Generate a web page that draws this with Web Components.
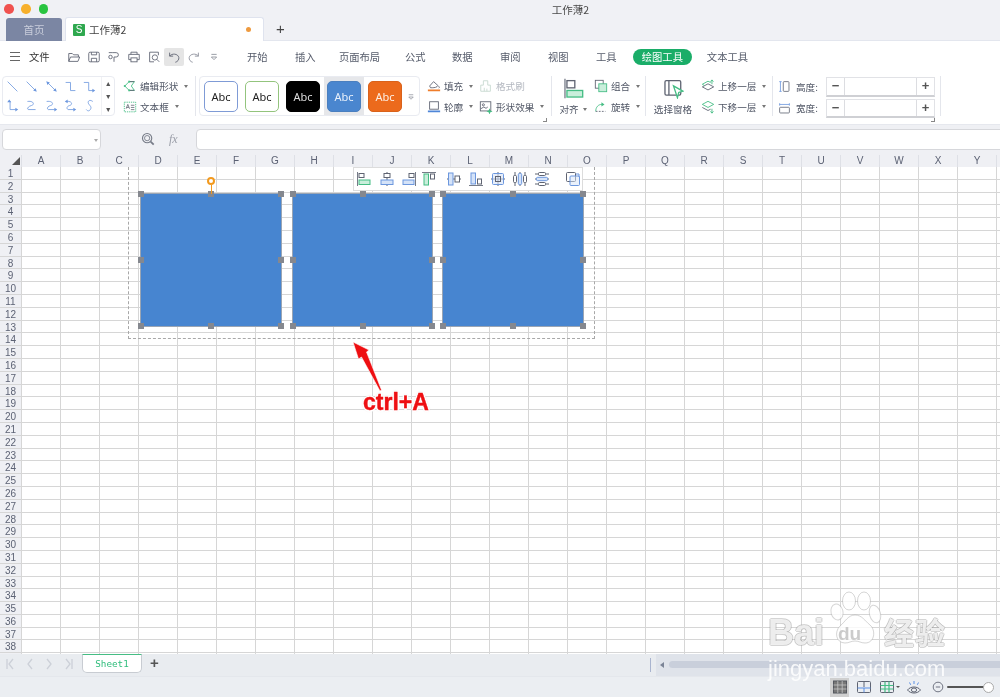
<!DOCTYPE html>
<html lang="zh">
<head>
<meta charset="utf-8">
<title>工作薄2</title>
<style>
  html, body { margin: 0; height: 699px; overflow: hidden; background: #fff; }
  body { font-family: "Noto Sans CJK SC", "Liberation Sans", sans-serif; color: #474d5c; }
</style>
</head>
<body>
<wps-app>
  <wps-titlebar></wps-titlebar>
  <wps-menubar></wps-menubar>
  <wps-ribbon></wps-ribbon>
  <wps-formula></wps-formula>
  <wps-sheet>
    <wps-selection></wps-selection>
    <wps-shape style="left:140px;top:38px" rotate></wps-shape>
    <wps-shape style="left:292px;top:38px;width:141px"></wps-shape>
    <wps-shape style="left:442px;top:38px"></wps-shape>
    <wps-floatbar></wps-floatbar>
    <wps-note></wps-note>
  </wps-sheet>
  <wps-sheetbar></wps-sheetbar>
  <wps-status></wps-status>
  <wps-watermark></wps-watermark>
</wps-app>

<script>
const G = '#45bd84', GL = '#c9eedb', B = '#6c97de', BL = '#d5e3f8', K = '#5f6472', O = '#ef7d2b';

// todos los iconos en una caja de 16x16
const ICONS = {
  open: `<path d="M2 13V4h4l1.500 1.500H13V8M2 13l2-5h10.500l-2 5z" stroke="${K}"/>`,
  save: `<rect x="2" y="2.500" width="12" height="11" rx="1.500" stroke="${K}"/><path d="M5 2.500v3h6v-3M5 13.500v-4h6v4" stroke="${K}"/>`,
  brush: `<path d="M6 3h4.500a2.500 2.500 0 0 1 0 5H8v5.500" stroke="${K}"/><circle cx="4" cy="8" r="2" stroke="${K}"/><path d="M2 3h4" stroke="${K}"/>`,
  print: `<path d="M4.500 5V2.500h7V5M4.500 11H2V5h12v6h-2.500" stroke="${K}"/><rect x="4.500" y="9" width="7" height="4.500" stroke="${K}"/>`,
  preview: `<path d="M13 6V2.500H3v11h5" stroke="${K}"/><circle cx="9" cy="8.500" r="3" stroke="${K}"/><path d="M11.200 10.700l2.800 2.800" stroke="${K}"/>`,
  undo: `<path d="M3 3v4h4M3 7c2.500-3.500 9.500-3 10.500 1.500.5 2.500-1.500 5-4 5.500" stroke="${K}"/>`,
  redo: `<path d="M13 3v4H9M13 7C10.500 3.500 3.500 4 2.500 8.500c-.5 2.500 1.500 5 4 5.500" stroke="#8b8f9a"/>`,
  more: `<path d="M5 5h6M5 8h6l-3 3z" stroke="#80848f" stroke-width=".9"/>`,
  line1: `<path d="M2 2l12 12" stroke="${B}"/>`,
  line2: `<path d="M2 2l11 11" stroke="${B}"/><path d="M14.500 14.500l-4.500-1.500 3-3z" fill="${B}"/>`,
  line3: `<path d="M3 3l10 10" stroke="${B}"/><path d="M1.500 1.500l4.500 1.500-3 3zM14.500 14.500l-4.500-1.500 3-3z" fill="${B}"/>`,
  elbow1: `<path d="M2 3h6v10h6" stroke="${B}"/>`,
  elbow2: `<path d="M1 3h6v10h5.500" stroke="${B}"/><path d="M15 13l-3.500-2.300v4.600z" fill="${B}"/>`,
  elbow3: `<path d="M3 3h2v10h7" stroke="${B}"/><path d="M4 .500l-2.500 3.500h5zM15 13l-3.500-2.300v4.600z" fill="${B}"/>`,
  curve1: `<path d="M3 3c8-1 9 4 5 5S2 12 4 13h9" stroke="${B}"/>`,
  curve2: `<path d="M2 3c8-1 9 4 5 5s-5 4-3 5h8" stroke="${B}"/><path d="M15 13l-3.500-2.300v4.600z" fill="${B}"/>`,
  curve3: `<path d="M3 3c7-1 8 4 4 5s-4 4-2 5h7" stroke="${B}"/><path d="M1 3l3.500-2.300v4.600zM15 13l-3.500-2.300v4.600z" fill="${B}"/>`,
  free: `<path d="M12 3c-4-3-7 0-5 3s4 4 2 7-4 1-5 0" stroke="${B}"/>`,
  edit: `<path d="M2 8l5-5h6l-3.500 5 3.500 5H7z" stroke="${G}"/><path d="M7 3h6M7 13h6" stroke="${K}"/><rect x="1" y="7" width="2" height="2" fill="${G}"/><rect x="6" y="2" width="2" height="2" fill="${G}"/><rect x="6" y="12" width="2" height="2" fill="${G}"/>`,
  textbox: `<rect x="1.500" y="2.500" width="13" height="11" stroke="${G}" stroke-dasharray="1.500 1"/><path d="M3.500 10l2-5 2 5M4.300 8.500h2.400M9 6h4M9 8.500h4M9 11h4" stroke="${K}" stroke-width=".9"/>`,
  fill: `<path d="M3 8l4.500-5 5 4.500c-1 2-4 2.500-6.500 2.500H4z" stroke="${K}"/><path d="M13 8c1 1 1.500 2 .5 2.500" stroke="${K}"/><rect x="1" y="12" width="14" height="2" fill="${O}"/>`,
  outline: `<rect x="3" y="2" width="10" height="8.500" stroke="${K}"/><rect x="1" y="12" width="14" height="2" fill="#4f86d8"/>`,
  painter: `<path d="M5 2h5v5h3v7H2V7h3z" stroke="#c6d8cf"/><path d="M6 10v4M9 11v3" stroke="#c6d8cf"/>`,
  effect: `<rect x="1.500" y="2" width="12" height="10.500" stroke="${K}"/><circle cx="5" cy="5.500" r="1.200" stroke="${K}"/><path d="M2 10l3.500-2 2.500 1.500 2-1.500" stroke="${K}"/><path d="M12 9.500l1 2.500 2.500 1-2.500 1-1 2.500-1-2.500-2.500-1 2.500-1z" fill="${G}"/>`,
  align: `<path d="M1.500 .5v15" stroke="#777c88"/><rect x="3" y="2" width="6" height="5.500" stroke="${K}"/><rect x="3" y="9.500" width="12" height="5" fill="${GL}" stroke="${G}"/>`,
  group: `<rect x="1.500" y="1.500" width="9" height="9" stroke="${K}"/><rect x="5.500" y="5.500" width="9" height="9" fill="${GL}" stroke="${G}"/>`,
  rotate: `<path d="M2 13c0-5 3-8 7-8" stroke="${G}"/><path d="M12 5l-3.500-2.500v5z" fill="${G}"/><path d="M2 13h11" stroke="${K}" stroke-dasharray="2 1.500"/>`,
  pane: `<rect x="1.500" y="2" width="12" height="11" rx="1" stroke="${K}"/><path d="M4.500 2v11" stroke="${K}"/><path d="M8 6l7 4-3 1-1 4z" fill="#fff" stroke="${G}"/>`,
  up: `<path d="M1.500 9l6.500-3.500 6.500 3.500-6.500 3.500z" stroke="${K}"/><path d="M1.500 6L8 2.500l3 1.500M1.500 6L4 7.500" stroke="${G}"/><path d="M12.500 6V1.500M10.800 3l1.700-2 1.700 2" stroke="${G}"/>`,
  down: `<path d="M1.500 5L8 1.500 14.500 5 8 8.500z" stroke="${G}"/><path d="M1.500 8.500L8 12l3-1.500" stroke="${K}"/><path d="M12.500 10v5M10.800 13l1.700 2 1.700-2" stroke="${G}"/>`,
  height: `<rect x="6.500" y="2" width="7" height="12" rx="1" stroke="${K}"/><path d="M3 2v12M1.500 2h3M1.500 14h3" stroke="${B}"/>`,
  width: `<rect x="2" y="6.500" width="12" height="7" rx="1" stroke="${K}"/><path d="M2 3h12M2 1.500v3M14 1.500v3" stroke="${B}"/>`,
  find: `<circle cx="7" cy="7" r="5.300" stroke="#777c88" stroke-width="1.300"/><circle cx="7" cy="7" r="3" stroke="#777c88"/><path d="M11 11l3.500 3.500" stroke="#777c88" stroke-width="2"/>`,
  a1: `<path d="M1.500 1v14" stroke="#777c88"/><rect x="3" y="2.500" width="5" height="4" stroke="${K}"/><rect x="3" y="9" width="11" height="4.500" fill="${GL}" stroke="${G}"/>`,
  a2: `<path d="M8 1v14" stroke="${K}"/><rect x="5" y="2.500" width="6" height="4" fill="#fff" stroke="${K}"/><rect x="2" y="9" width="12" height="4.500" fill="${BL}" stroke="${B}"/>`,
  a3: `<path d="M14.500 1v14" stroke="#777c88"/><rect x="8" y="2.500" width="5" height="4" stroke="${K}"/><rect x="2" y="9" width="11" height="4.500" fill="${BL}" stroke="${B}"/>`,
  a4: `<path d="M1 1.500h14" stroke="#777c88"/><rect x="3" y="3" width="4.500" height="11" fill="${GL}" stroke="${G}"/><rect x="9.500" y="3" width="4" height="5" stroke="${K}"/>`,
  a5: `<path d="M1 8h14" stroke="${K}"/><rect x="2.500" y="2" width="4.500" height="12" fill="${BL}" stroke="${B}"/><rect x="9" y="5" width="4.500" height="6" fill="#fff" stroke="${K}"/>`,
  a6: `<path d="M1 14.500h14" stroke="#777c88"/><rect x="3" y="2" width="4.500" height="11" fill="${BL}" stroke="${B}"/><rect x="9.500" y="8" width="4" height="5" stroke="${K}"/>`,
  a7: `<path d="M1 8h14M8 1v14" stroke="${K}"/><rect x="2.500" y="2.500" width="11" height="11" rx="1" fill="${BL}" fill-opacity=".6" stroke="${B}"/><rect x="5.500" y="5.500" width="5" height="5" stroke="${K}"/>`,
  a8: `<path d="M3 1v14M8 1v14M13 1v14" stroke="${K}"/><rect x="1.500" y="4.500" width="3" height="7" rx="1" fill="#fff" stroke="${K}"/><rect x="6.300" y="2.500" width="3.400" height="11" rx="1" fill="${BL}" stroke="${B}"/><rect x="11.500" y="4.500" width="3" height="7" rx="1" fill="#fff" stroke="${K}"/>`,
  a9: `<path d="M1 3h14M1 8h14M1 13h14" stroke="${K}"/><rect x="4.500" y="1.500" width="7" height="3" rx="1" fill="#fff" stroke="${K}"/><rect x="2.500" y="6.300" width="11" height="3.400" rx="1" fill="${BL}" stroke="${B}"/><rect x="4.500" y="11.500" width="7" height="3" rx="1" fill="#fff" stroke="${K}"/>`,
  a10: `<rect x="1.500" y="1.500" width="9" height="9" rx="1" stroke="${K}"/><rect x="5" y="5" width="9.500" height="9.500" rx="1" fill="${BL}" fill-opacity=".5" stroke="${B}"/><path d="M11 3h3v3" stroke="${B}"/>`,
  grid: `<rect x="1.500" y="2" width="13" height="12" fill="#777" stroke="#55585f"/><path d="M1.500 6h13M1.500 10h13M5.800 2v12M10.200 2v12" stroke="#c6c6c6" stroke-width=".8"/>`,
  split: `<rect x="1.500" y="2.500" width="13" height="11" rx="1" stroke="${K}"/><path d="M8 2.500V8" stroke="${K}"/><path d="M1.500 9h13M8 9v4.500" stroke="#5b8fe3"/>`,
  freeze: `<rect x="1.500" y="2.500" width="13" height="11" rx="1" stroke="${K}"/><path d="M1.500 6.500h13M1.500 10h13M6 2.500v11M10 2.500v11" stroke="${G}" stroke-width="1.200"/>`,
  eye: `<path d="M1.500 11c3-4 10-4 13 0-3 4-10 4-13 0z" stroke="${K}"/><ellipse cx="8" cy="11" rx="2.600" ry="2" stroke="${K}"/><path d="M8 2v3M3.500 3.500l1.200 2.300M12.500 3.500l-1.200 2.300" stroke="#5b8fe3"/>`,
  minus: `<circle cx="8" cy="8" r="5.500" stroke="${K}"/><path d="M5.500 8h5" stroke="${K}"/>`
};

class WpsIcon extends HTMLElement {
  connectedCallback() {
    const size = this.getAttribute('size') || 16;
    this.attachShadow({ mode: 'open' }).innerHTML = `
      <style>:host { display: inline-flex; flex: none; } svg { display: block; }</style>
      <svg width="${size}" height="${size}" viewBox="0 0 16 16" fill="none">${ICONS[this.getAttribute('name')]}</svg>`;
  }
}

// base: cada elemento declara su html en render()
class Block extends HTMLElement {
  connectedCallback() {
    this.attachShadow({ mode: 'open' }).innerHTML = this.render();
  }
}

class WpsApp extends Block {
  render() {
    // la captura original viene reescalada y se ve algo suave
    return `<style>
      :host { display: block; position: relative; width: 1000px; height: 699px; overflow: hidden; background: #fff; filter: blur(.35px); }
    </style><slot></slot>`;
  }
}

class WpsTitlebar extends Block {
  render() {
    return `<style>
      :host { display: block; height: 41px; background: #f0f1f5; position: relative; box-sizing: border-box; border-bottom: 1px solid #e3e6ee; }
      .lights { display: flex; gap: 7.800px; padding: 4px 0 0 4px; height: 9px; }
      .lights i { width: 9.500px; height: 9.500px; border-radius: 50%; }
      .title { position: absolute; left: 0; right: 0; top: 1px; text-align: center; font-size: 10.500px; line-height: 17px; color: #4a4a4a; transform: translateX(70.500px); }
      .tabs { display: flex; align-items: flex-end; padding: 5px 0 0 6px; height: 23px; gap: 3px; }
      .tab { height: 23px; box-sizing: border-box; display: flex; align-items: center; font-size: 10.500px; border-radius: 3px 3px 0 0; }
      .home { width: 56px; justify-content: center; background: #7b86a3; color: #c9cedb; }
      .book { width: 199px; background: #fff; border: 1px solid #dfe3ee; border-bottom: 0; padding: 0 12px 0 7px; gap: 4px; color: #444; height: 24px; }
      .s { width: 12px; height: 12px; background: #2fa84f; border-radius: 1px; color: #fff; font: 10px/12px "Liberation Sans", sans-serif; text-align: center; }
      .name { flex: 1; }
      .dot { width: 5px; height: 5px; border-radius: 50%; background: #ee9a3f; }
      .plus { font: 15px/20px "Liberation Sans", sans-serif; color: #444; margin: 0 0 1px 9px; align-self: center; }
    </style>
    <div class="lights"><i style="background:#f0524f"></i><i style="background:#f7b02c"></i><i style="background:#29c440"></i></div>
    <div class="title">工作薄2</div>
    <div class="tabs">
      <div class="tab home">首页</div>
      <div class="tab book"><span class="s">S</span><span class="name">工作薄2</span><span class="dot"></span></div>
      <div class="plus">+</div>
    </div>`;
  }
}

class WpsMenubar extends Block {
  render() {
    const tools = ['open', 'save', 'brush', 'print', 'preview', 'undo', 'redo', 'more'];
    // nombre y hueco hasta la siguiente pestaña
    const tabs = [['开始', 27.4], ['插入', 23.4], ['页面布局', 24.8], ['公式', 26.4], ['数据', 27.4], ['审阅', 27.4], ['视图', 27.4], ['工具', 16.4]];
    return `<style>
      :host { display: flex; height: 31px; align-items: center; font-size: 10.300px; color: #555b6a; padding-left: 10px; box-sizing: border-box; }
      .burger { width: 10px; height: 7px; border-top: 1px solid #666; border-bottom: 1px solid #666; position: relative; margin-right: 9px; }
      .burger::after { content: ""; position: absolute; left: 0; right: 0; top: 3px; height: 1px; background: #666; }
      .file { width: 20.600px; color: #333; margin-right: 14.400px; white-space: nowrap; }
      .tools { display: flex; width: 160px; }
      .tool { width: 20px; height: 18px; flex: none; display: flex; align-items: center; justify-content: center; border-radius: 2px; }
      .tool.on { background: #e5e5e5; }
      .tabs { display: flex; margin-left: 23px; }
      .tabs span { white-space: nowrap; }
      .pill { background: #1aad68; color: #fff; border-radius: 8px; width: 59px; text-align: center; line-height: 16px; margin-right: 15px; }
    </style>
    <div class="burger"></div><div class="file">文件</div>
    <div class="tools">${tools.map(n => `<div class="tool ${n === 'undo' ? 'on' : ''}"><wps-icon name="${n}" size="14"></wps-icon></div>`).join('')}</div>
    <div class="tabs">${tabs.map(t => `<span style="margin-right:${t[1]}px">${t[0]}</span>`).join('')}<span class="pill">绘图工具</span><span>文本工具</span></div>`;
  }
}

class WpsBtn extends Block {
  render() {
    const disabled = this.hasAttribute('disabled');
    return `<style>
      :host { display: flex; align-items: center; height: 20.500px; font-size: 9.600px; white-space: nowrap; color: ${disabled ? '#b4b8c0' : '#515766'}; }
      wps-icon { margin-right: 3px; }
      .caret { width: 0; height: 0; border: 2.500px solid transparent; border-top: 3px solid #777; border-bottom: 0; margin-left: 6px; }
    </style>
    <wps-icon name="${this.getAttribute('icon')}" size="14"></wps-icon><span>${this.getAttribute('label')}</span>${this.hasAttribute('caret') ? '<i class="caret"></i>' : ''}`;
  }
}

class WpsSpin extends Block {
  render() {
    return `<style>
      :host { display: flex; width: 109px; height: 19.500px; box-sizing: border-box; background: #fff; border: 1px solid #e1e2e6; border-bottom: 2px solid #cfd0d4; font: 13px/16px "Liberation Sans", sans-serif; color: #555; }
      b { width: 17px; text-align: center; font-weight: bold; }
      i { flex: 1; border-left: 1px solid #dcdde1; border-right: 1px solid #dcdde1; }
    </style><b>−</b><i></i><b>+</b>`;
  }
}

class WpsRibbon extends Block {
  render() {
    const lines = ['line1', 'line2', 'line3', 'elbow1', 'elbow2', 'elbow3', 'curve1', 'curve2', 'curve3', 'free'];
    const styles = [
      ['#fff', '#222', '#7f9bd6', 0], ['#fff', '#222', '#93c47d', 0], ['#000', '#ddd', '#000', 0],
      ['#4a86cf', '#e8f0fb', '#4a7fbf', 1], ['#ec6a1c', '#fdeee3', '#d9621b', 0]
    ];
    return `<style>
      :host { display: flex; height: 52px; padding: 4px 0 0 2px; box-sizing: border-box; align-items: flex-start; background: #fff; position: relative; }
      .box { border: 1px solid #e9ebf1; border-radius: 4px; height: 40px; box-sizing: border-box; display: flex; }
      .lines { width: 113px; }
      .line-grid { display: grid; grid-template-columns: repeat(5, 19.300px); grid-auto-rows: 19px; width: 100px; justify-items: center; align-items: center; }
      .scroll { width: 12px; margin-left: auto; border-left: 1px solid #f0f1f4; color: #555; font: 7px/13px "Liberation Sans", sans-serif; text-align: center; }
      .sep { width: 1px; height: 40px; background: #e4e6ec; flex: none; }
      .col { display: flex; flex-direction: column; flex: none; }
      .gallery { width: 221px; padding-left: 4px; align-items: center; position: relative; }
      .abc { width: 34px; height: 31px; box-sizing: border-box; border-radius: 5px; border: 1px solid; font: 11px/29px "Noto Sans", sans-serif; text-align: center; margin-right: 7px; flex: none; }
      .sel { background: #e6e7ea; padding: 0 3px; height: 38px; margin-right: 4px; margin-left: -3px; display: flex; align-items: center; }
      .sel .abc { margin: 0; }
      .gmore { position: absolute; right: 2px; top: 14px; }
      .big { display: flex; flex-direction: column; align-items: center; font-size: 9.600px; white-space: nowrap; flex: none; line-height: 12px; gap: 2px; padding-top: 2px; color: #515766; height: 40px; box-sizing: border-box; }
      .big span { margin-top: auto; padding-bottom: 1px; }
      .caret { display: inline-block; width: 0; height: 0; border: 2.500px solid transparent; border-top: 3px solid #777; border-bottom: 0; margin-left: 4px; vertical-align: 2px; }
      .size { display: flex; align-items: center; height: 21.500px; font-size: 9.600px; white-space: nowrap; color: #515766; }
      .size span { margin-left: 5px; width: 31px; }
      .mark { position: absolute; width: 3px; height: 3px; border-right: 1px solid #888; border-bottom: 1px solid #888; top: 46px; }
    </style>
    <div class="box lines">
      <div class="line-grid">${lines.map(n => `<wps-icon name="${n}" size="13"></wps-icon>`).join('')}</div>
      <div class="scroll">▲<br>▼<br>▼</div>
    </div>
    <div class="col" style="margin-left:8px;width:72px">
      <wps-btn icon="edit" label="编辑形状" caret></wps-btn>
      <wps-btn icon="textbox" label="文本框" caret></wps-btn>
    </div>
    <div class="sep"></div>
    <div class="box gallery" style="margin-left:3px">
      ${styles.map(s => {
        const b = `<div class="abc" style="background:${s[0]};color:${s[1]};border-color:${s[2]}">Abc</div>`;
        return s[3] ? `<div class="sel">${b}</div>` : b;
      }).join('')}
      <wps-icon class="gmore" name="more" size="12"></wps-icon>
    </div>
    <div class="col" style="margin-left:7px;width:52px">
      <wps-btn icon="fill" label="填充" caret></wps-btn>
      <wps-btn icon="outline" label="轮廓" caret></wps-btn>
    </div>
    <div class="col" style="width:72px">
      <wps-btn icon="painter" label="格式刷" disabled></wps-btn>
      <wps-btn icon="effect" label="形状效果" caret></wps-btn>
    </div>
    <div class="sep"></div>
    <div class="big" style="width:42px">
      <wps-icon name="align" size="21"></wps-icon><span>对齐<i class="caret"></i></span>
    </div>
    <div class="col" style="width:51px">
      <wps-btn icon="group" label="组合" caret></wps-btn>
      <wps-btn icon="rotate" label="旋转" caret></wps-btn>
    </div>
    <div class="sep"></div>
    <div class="big" style="width:54px">
      <wps-icon name="pane" size="21"></wps-icon><span>选择窗格</span>
    </div>
    <div class="sep" style="background:transparent"></div>
    <div class="col" style="width:71px">
      <wps-btn icon="up" label="上移一层" caret></wps-btn>
      <wps-btn icon="down" label="下移一层" caret></wps-btn>
    </div>
    <div class="sep"></div>
    <div class="col" style="margin-left:5px;width:48px">
      <div class="size"><wps-icon name="height" size="13"></wps-icon><span>高度:</span></div>
      <div class="size"><wps-icon name="width" size="13"></wps-icon><span>宽度:</span></div>
    </div>
    <div class="col" style="gap:2px;padding-top:1px">
      <wps-spin></wps-spin>
      <wps-spin></wps-spin>
    </div>
    <div class="sep" style="margin-left:5px"></div>
    <i class="mark" style="left:543px"></i>
    <i class="mark" style="left:931px"></i>`;
  }
}

class WpsFormula extends Block {
  render() {
    return `<style>
      :host { display: flex; height: 31px; box-sizing: border-box; background: #eff0f4; padding: 4px 0 5px 2px; align-items: stretch; border-top: 1px solid #e6e8ee; }
      .field { background: #fff; border: 1px solid #d6d7db; border-radius: 4px; box-sizing: border-box; }
      .name { width: 99px; position: relative; }
      .name::after { content: ""; position: absolute; right: 2px; top: 9px; border: 2.500px solid transparent; border-top: 3px solid #aaa; border-bottom: 0; }
      .find { margin: 3px 0 0 40px; }
      .fx { font: italic 12px/21px "Liberation Serif", serif; color: #9a9ea8; width: 27px; margin-left: 14px; white-space: nowrap; }
      .input { flex: 1; margin-right: -4px; }
    </style>
    <div class="field name"></div>
    <wps-icon class="find" name="find" size="14"></wps-icon>
    <div class="fx">fx</div>
    <div class="field input"></div>`;
  }
}

class WpsSheet extends Block {
  render() {
    const cols = 'ABCDEFGHIJKLMNOPQRSTUVWXY'.split('');
    const rows = Array.from({ length: 39 }, (_, i) => i + 1);
    return `<style>
      :host { display: block; position: relative; height: 499px; overflow: hidden; background: #fff; font-family: "Liberation Sans", sans-serif; }
      .head { display: grid; grid-template-columns: 22px repeat(25, 39px); height: 12px; background: #eff0f4; }
      .head div { font-size: 10px; line-height: 11px; text-align: center; color: #5c6274; border-right: 1px solid #dee0e6; box-sizing: border-box; }
      .corner { position: relative; }
      .corner::after { content: ""; position: absolute; left: 12px; top: 2px; border-style: solid; border-width: 0 0 8px 8px; border-color: transparent transparent #555 transparent; }
      .row { display: flex; height: 12.800px; box-sizing: border-box; border-bottom: 1px solid #d6d6d6; }
      .num { width: 22px; flex: none; background: #eff0f4; border-right: 1px solid #d6d6d6; box-sizing: border-box; font-size: 10px; line-height: 13px; text-align: center; color: #5c6274; }
      .cells { flex: 1; background: repeating-linear-gradient(to right, transparent 0 38px, #d6d6d6 38px 39px); }
      .top { border-top: 1px solid #d8dae0; margin-top: -1px; }
    </style>
    <div class="head top"><div class="corner"></div>${cols.map(c => `<div>${c}</div>`).join('')}<div></div></div>
    ${rows.map(n => `<div class="row"><div class="num">${n}</div><div class="cells"></div></div>`).join('')}
    <slot></slot>`;
  }
}

class WpsShape extends Block {
  render() {
    const spots = [[0, 0], [50, 0], [100, 0], [0, 50], [100, 50], [0, 100], [50, 100], [100, 100]];
    const handles = spots.map(s => `<i class="h" style="left:${s[0]}%;top:${s[1]}%"></i>`).join('');
    const rot = this.hasAttribute('rotate') ? '<i class="stem"></i><i class="knob"></i>' : '';
    return `<style>
      :host { display: block; position: absolute; width: 142px; height: 134px; box-sizing: border-box; background: #4785d0; border: 1px solid #9aa5b4; }
      .h { position: absolute; width: 6px; height: 6px; margin: -3px 0 0 -3px; background: #85888f; }
      .stem { position: absolute; left: 50%; top: -9px; width: 1px; height: 9px; background: #f39a1e; }
      .knob { position: absolute; left: calc(50% - 4px); top: -17px; width: 8px; height: 8px; box-sizing: border-box; border: 2px solid #f39a1e; border-radius: 50%; background: #fff; }
    </style>${handles}${rot}`;
  }
}

class WpsSelection extends Block {
  render() {
    return `<style>
      :host { display: block; position: absolute; left: 128px; top: 12px; width: 467px; height: 172px; box-sizing: border-box; border: 1px dashed #a8a8a8; border-top: 0; }
    </style>`;
  }
}

class WpsFloatbar extends Block {
  render() {
    const items = [['a1', 1], ['a2', 7], ['a3', 6], ['a4', 4], ['a5', 9], ['a6', 6], ['a7', 6], ['a8', 6], ['a9', 6], ['a10', 15]];
    return `<style>
      :host { display: flex; position: absolute; left: 353px; top: 12px; width: 230px; height: 24px; box-sizing: border-box; background: #fff; border: 1px solid #dcdcdc; align-items: center; padding-left: 1px; }
      wps-icon { flex: none; }
    </style>${items.map(i => `<wps-icon name="${i[0]}" size="16" style="margin-left:${i[1]}px"></wps-icon>`).join('')}`;
  }
}

class WpsNote extends Block {
  render() {
    return `<style>
      :host { display: block; position: absolute; left: 345px; top: 183px; width: 100px; height: 80px; }
      svg { position: absolute; left: 0; top: 0; }
      .t { position: absolute; left: 18px; top: 51px; font: bold 23px/26px "Liberation Sans", sans-serif; color: #ee0f12; white-space: nowrap; -webkit-text-stroke: .4px #ee0f12;
        text-shadow: -1.500px 0 #fff, 1.500px 0 #fff, 0 -1.500px #fff, 0 1.500px #fff, -1px -1px #fff, 1px 1px #fff, -1px 1px #fff, 1px -1px #fff, 0 0 3px #bbb; }
    </style>
    <svg width="60" height="60" viewBox="0 0 60 60"><path d="M8 4L24 12 21.500 14 36.500 52 35 53 16.500 19 13.500 21z" fill="#ee0f12" stroke="#fff" stroke-width=".6"/></svg>
    <div class="t">ctrl+A</div>`;
  }
}

class WpsSheetbar extends Block {
  render() {
    const chev = d => `<svg width="12" height="14" viewBox="0 0 12 14" fill="none" stroke="#ccd0d8" stroke-width="1.300">${d}</svg>`;
    return `<style>
      :host { display: flex; height: 22px; background: #e9ecf0; position: relative; }
      .nav { display: flex; gap: 7.500px; padding: 3px 0 0 4px; width: 82px; box-sizing: border-box; }
      .tab { width: 60px; height: 19px; box-sizing: border-box; background: #fff; border: 1px solid #c8ccd2; border-top: 1px solid #45bd84; border-radius: 0 0 5px 5px; color: #2fbd7c; font: 9.300px/17px "DejaVu Sans Mono", monospace; text-align: center; }
      .add { font: bold 15px/18px "Liberation Sans", sans-serif; color: #555; margin-left: 8px; }
      .hs { margin-left: auto; width: 344px; background: #dfe3ea; display: flex; align-items: center; padding-bottom: 1px; box-sizing: border-box; }
      .bar { width: 1px; height: 14px; background: #a9b4cf; margin-right: 9px; margin-left: -6px; }
      .arrow { border: 3px solid transparent; border-right: 4px solid #7b8496; border-left: 0; }
      .track { flex: 1; height: 7px; background: #c9cfdb; border-radius: 4px 0 0 4px; margin-left: 5px; }
    </style>
    <div class="nav">
      ${chev('<path d="M3 2v10M9 2L5 7l4 5"/>')}${chev('<path d="M8 2L4 7l4 5"/>')}${chev('<path d="M4 2l4 5-4 5"/>')}${chev('<path d="M3 2l4 5-4 5M9 2v10"/>')}
    </div>
    <div class="tab">Sheet1</div>
    <div class="add">+</div>
    <div class="hs"><i class="bar"></i><i class="arrow"></i><div class="track"></div></div>`;
  }
}

class WpsStatus extends Block {
  render() {
    return `<style>
      :host { display: flex; height: 21px; background: #ebeef2; align-items: center; padding-left: 830px; box-sizing: border-box; border-top: 1px solid #e4e7ec; }
      .on { width: 19px; height: 19px; background: #cfcfcf; display: flex; align-items: center; justify-content: center; flex: none; }
      wps-icon { flex: none; }
      .dd { border: 2px solid transparent; border-top: 2.500px solid #555; border-bottom: 0; margin: 0 6px 0 1px; }
      .slider { width: 42px; height: 2px; background: #555; border-radius: 1px; position: relative; margin-left: 2px; flex: none; }
      .slider::after { content: ""; position: absolute; right: -5px; top: -4px; width: 9px; height: 9px; border-radius: 50%; background: #fff; border: 1px solid #aaa; }
    </style>
    <div class="on"><wps-icon name="grid" size="16"></wps-icon></div>
    <wps-icon name="split" size="16" style="margin-left:7px"></wps-icon>
    <wps-icon name="freeze" size="16" style="margin-left:7px"></wps-icon><i class="dd"></i>
    <wps-icon name="eye" size="16"></wps-icon>
    <wps-icon name="minus" size="14" style="margin-left:9px"></wps-icon>
    <div class="slider"></div>`;
  }
}

class WpsWatermark extends Block {
  render() {
    const stroke = 'rgba(150,150,150,.4)';
    return `<style>
      :host { display: block; position: absolute; left: 766px; top: 590px; width: 190px; height: 90px; color: rgba(255,255,255,.8); font-family: "Liberation Sans", sans-serif; pointer-events: none; }
      .edge { text-shadow: -1px 0 ${stroke}, 1px 0 ${stroke}, 0 -1px ${stroke}, 0 1px ${stroke}; }
      .logo { display: flex; align-items: flex-start; height: 62px; }
      .bai { font: bold 36px/36px "Liberation Sans", sans-serif; margin: 25px 0 0 2px; width: 60px; }
      .paw { width: 54px; height: 60px; flex: none; position: relative; }
      .paw svg { position: absolute; left: 0; top: 0; }
      .du { position: absolute; left: 10px; top: 34px; font: bold 19px/20px "Liberation Sans", sans-serif; color: rgba(190,190,190,.8); }
      .jy { font: bold 30px/34px "Noto Sans CJK SC", sans-serif; margin: 24px 0 0 2px; white-space: nowrap; letter-spacing: 1px; }
      .url { font-size: 22px; line-height: 24px; margin: 5px 0 0 2px; white-space: nowrap; color: rgba(255,255,255,.85); }
    </style>
    <div class="logo">
      <div class="bai edge">Bai</div>
      <div class="paw">
        <svg width="54" height="60" viewBox="0 0 54 60" fill="rgba(255,255,255,.8)" stroke="${stroke}">
          <ellipse cx="9" cy="22" rx="6" ry="8" transform="rotate(-15 9 22)"/>
          <ellipse cx="21" cy="11" rx="6.500" ry="9"/>
          <ellipse cx="36" cy="11" rx="6.500" ry="9"/>
          <ellipse cx="47" cy="24" rx="5.500" ry="9" transform="rotate(-15 47 24)"/>
          <path d="M27 25c7 0 10 6 15 10 6 5 5 18-5 18-4 0-6-2-10-2s-6 2-10 2C8 53 6 42 12 36c5-4 8-11 15-11z"/>
        </svg>
        <div class="du">du</div>
      </div>
      <div class="jy edge">经验</div>
    </div>
    <div class="url">jingyan.baidu.com</div>`;
  }
}

customElements.define('wps-icon', WpsIcon);
customElements.define('wps-app', WpsApp);
customElements.define('wps-titlebar', WpsTitlebar);
customElements.define('wps-menubar', WpsMenubar);
customElements.define('wps-btn', WpsBtn);
customElements.define('wps-spin', WpsSpin);
customElements.define('wps-ribbon', WpsRibbon);
customElements.define('wps-formula', WpsFormula);
customElements.define('wps-sheet', WpsSheet);
customElements.define('wps-shape', WpsShape);
customElements.define('wps-selection', WpsSelection);
customElements.define('wps-floatbar', WpsFloatbar);
customElements.define('wps-note', WpsNote);
customElements.define('wps-sheetbar', WpsSheetbar);
customElements.define('wps-status', WpsStatus);
customElements.define('wps-watermark', WpsWatermark);
</script>
</body>
</html>
